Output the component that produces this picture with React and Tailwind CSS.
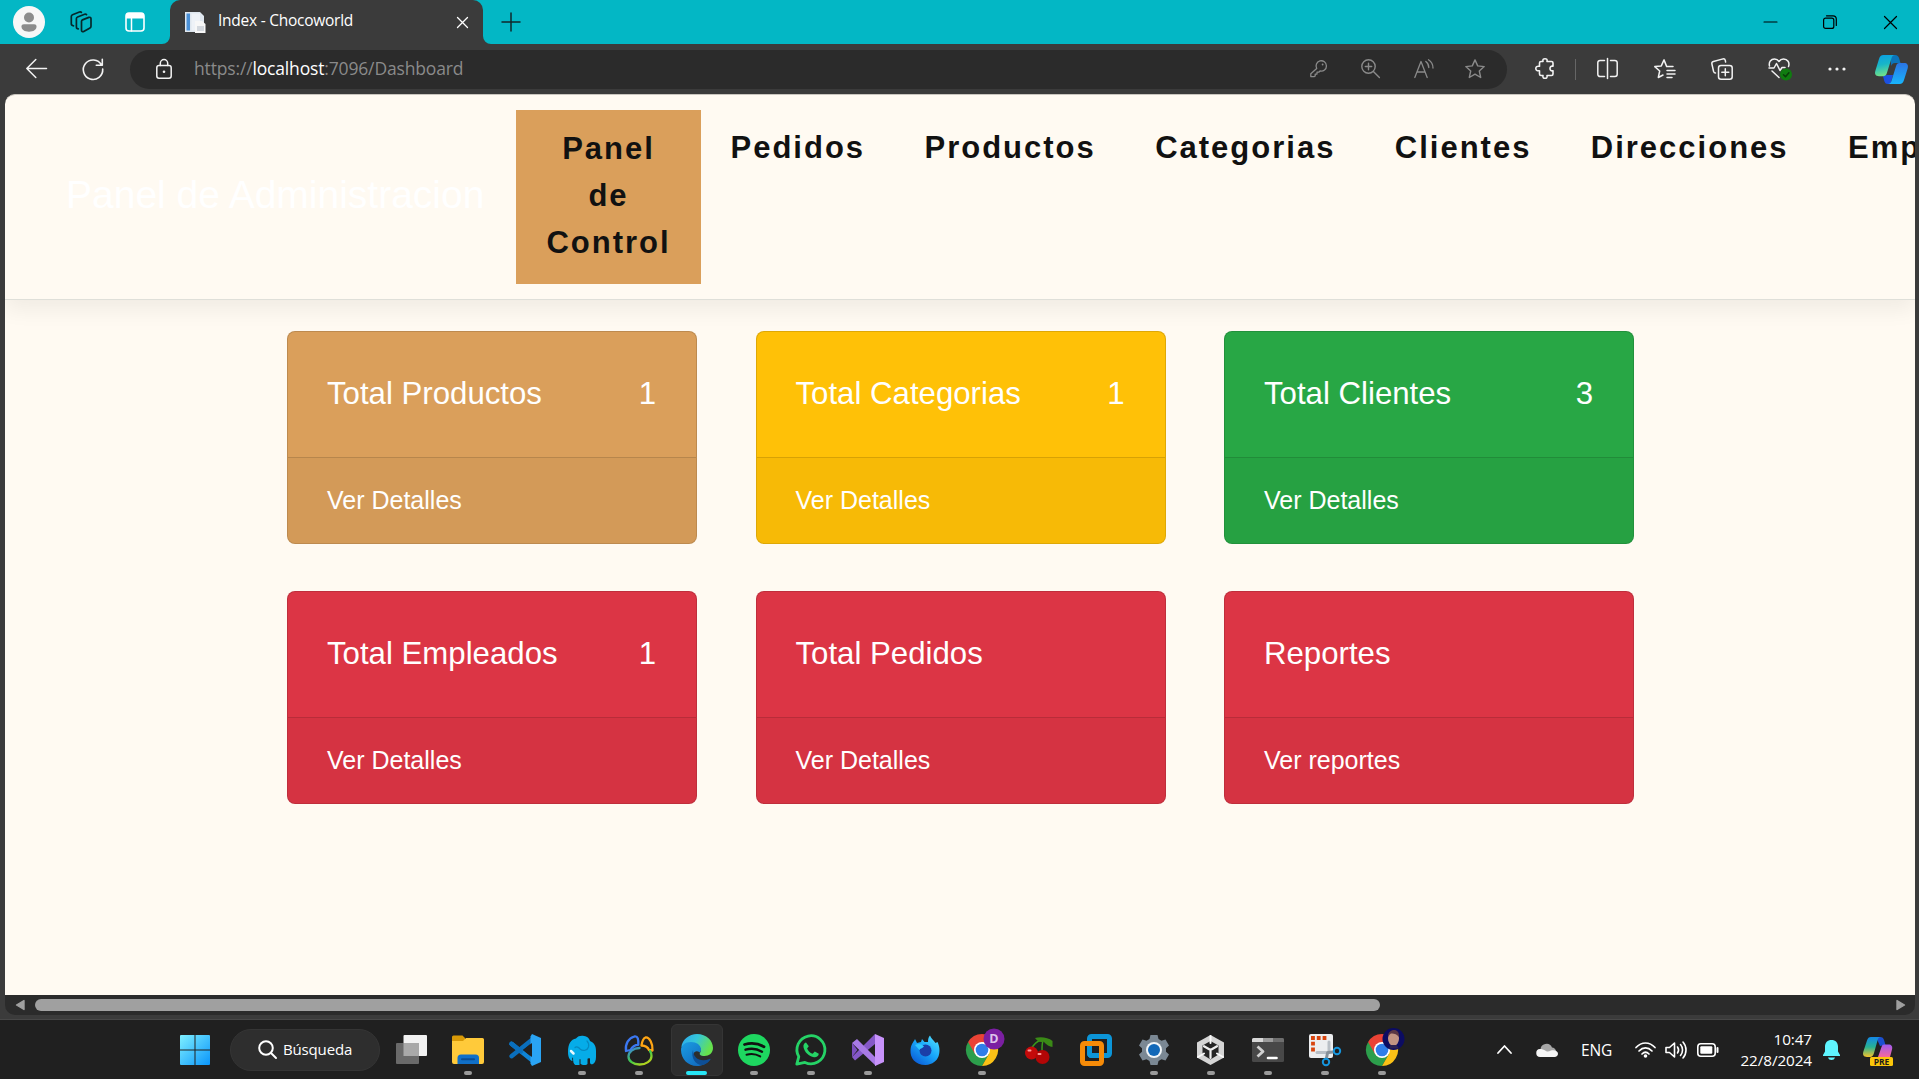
import React from "react";

const Svg = ({ w = 20, h = w, box, className = "", children, ...rest }) => (
  <svg
    width={w}
    height={h}
    viewBox={box || `0 0 ${w} ${h}`}
    fill="none"
    stroke="currentColor"
    strokeWidth="1.4"
    strokeLinecap="round"
    strokeLinejoin="round"
    className={"block shrink-0 overflow-visible " + className}
    {...rest}
  >
    {children}
  </svg>
);

function TitleBar() {
  return (
    <div className="flex h-11 shrink-0 items-center bg-[#03b7c5] text-[#10282b]">
      <Svg w={32} className="ml-[13px]" stroke="none">
        <circle cx="16" cy="16" r="16" fill="#f7f7f7" />
        <circle cx="16" cy="11.5" r="5" fill="#8c8c8c" />
        <path d="M8.5 20.5c0-1.4.9-2.3 2.3-2.3h10.4c1.4 0 2.3.9 2.3 2.3 0 3.3-3 5.2-7.500 5.200s-7.500-1.900-7.500-5.200z" fill="#8c8c8c" />
      </Svg>
      <Svg w={22} className="ml-[25px]" strokeWidth="1.700" stroke="#06282b">
        <path d="M12.500 8.900l6.300-2.500c1.200-.4 2.200.2 2.200 1.400v7.500c0 .7-.4 1.300-1 1.600l-6.300 3.600c-1.100.6-2.200 0-2.200-1.200v-8.700c0-.8.300-1.400 1-1.700z" />
        <path d="M8.300 17.800c-1.200 0-1.900-.6-1.900-1.800V7.800c0-.9.400-1.500 1.200-1.800l7-2.800c.8-.3 1.500-.1 1.900.4" />
        <path d="M3.500 14.800C2 14.800 1.300 14 1.300 12.800V5.500c0-.9.400-1.500 1.200-1.800L9.500 1c.8-.3 1.500-.1 1.900.4" />
      </Svg>
      <Svg w={20} className="ml-[33px]" stroke="none">
        <rect x="1" y="1" width="18" height="18" rx="3" stroke="#fff" strokeWidth="1.600" />
        <path d="M1 4a3 3 0 013-3h12a3 3 0 013 3v2.500H1z" fill="#fff" />
        <path d="M6.500 6v13" stroke="#fff" strokeWidth="1.500" />
      </Svg>
      <div className="relative ml-[25px] flex h-11 w-[313px] items-center rounded-t-[10px] bg-[#3b3b3b] text-white">
        <Svg w={8} className="absolute bottom-0 -left-2" stroke="none">
          <path d="M8 0v8H0a8 8 0 008-8z" fill="#3b3b3b" />
        </Svg>
        <Svg w={8} className="absolute -right-2 bottom-0" stroke="none">
          <path d="M0 0v8h8a8 8 0 01-8-8z" fill="#3b3b3b" />
        </Svg>
        <Svg w={21} className="ml-[15px]" stroke="none">
          <path d="M0 0h15l4 4v16H0z" fill="#dfe7ef" />
          <path d="M1.500 1.500h3.500v17H1.500z" fill="#4a90d6" />
          <path d="M6.500 1.500h8.500v17H6.500z" fill="#eef2f7" />
          <path d="M10 9h7l3.500 3v9H10z" fill="#f7f7f7" />
          <path d="M12 14h7v5h-7z" fill="#d3d8de" />
        </Svg>
        <span className="ml-[12px] w-[150px] pb-[2px] whitespace-nowrap font-['Open_Sans',sans-serif] text-[15.500px] tracking-[-0.250px]">Index - Chocoworld</span>
        <Svg w={11} className="ml-[89px]" strokeWidth="1.300">
          <path d="M.5.5l10 10M10.500.5l-10 10" />
        </Svg>
      </div>
      <Svg w={18} className="mb-px ml-[19px]" strokeWidth="1.500">
        <path d="M9 0v18M0 9h18" />
      </Svg>
      <div className="mr-[22px] ml-auto flex items-center text-black">
        <Svg w={13} strokeWidth="1.100"><path d="M0 6h13" /></Svg>
        <Svg w={14} className="ml-[46px]" strokeWidth="1.200">
          <rect x=".6" y="3.200" width="10.200" height="10.200" rx="2" />
          <path d="M3.500.8H10a3.300 3.300 0 013.300 3.300v6.400" />
        </Svg>
        <Svg w={13} className="ml-[47px]" strokeWidth="1.200"><path d="M.5.5l12 12M12.500.5l-12 12" /></Svg>
      </div>
    </div>
  );
}

const star = "M10 .9l2.700 6 6.500.7-4.900 4.400 1.400 6.500-5.700-3.300-5.700 3.300 1.400-6.500L.8 7.600l6.500-.7z";

function CopilotLogo() {
  return (
    <Svg w={33} h={29} stroke="none">
      <defs>
        <linearGradient id="cpA" x1="0" y1="0" x2=".2" y2="1">
          <stop offset="0" stopColor="#0a9de6" /><stop offset=".5" stopColor="#18b6c8" /><stop offset="1" stopColor="#6fe08a" />
        </linearGradient>
        <linearGradient id="cpB" x1="0" y1="0" x2="0" y2="1">
          <stop offset="0" stopColor="#2b74e4" /><stop offset="1" stopColor="#18b5fb" />
        </linearGradient>
      </defs>
      <path d="M15 0h5c2.500 0 3.500 1.200 4.200 3.500L25.500 8H20c-2 0-3 1-3.700 3z" fill="#0b74ba" />
      <path d="M8 21l4-1h6l-2.500 9H13c-2.300 0-3.200-1.300-3.800-3.300z" fill="#1c50e0" />
      <path d="M8.500 0H20c-2 0-3 1.500-3.600 3.500l-4.500 14.500c-.7 2.200-1.800 3.200-4 3.200H4c-3.300 0-4.600-2-3.700-5.200L4 4C4.800 1.300 6 0 8.500 0z" fill="url(#cpA)" />
      <path d="M24.500 8H29c3.300 0 4.600 2 3.700 5.200L29 25c-.8 2.700-2 4-4.500 4H13c2 0 3-1.500 3.600-3.500L21 11.200C21.700 9 22.500 8 24.500 8z" fill="url(#cpB)" />
    </Svg>
  );
}

function Toolbar() {
  return (
    <div className="flex h-[50px] shrink-0 items-center bg-[#3b3b3b] text-[#f2f2f2]">
      <Svg w={21} className="mb-px ml-[26px]" strokeWidth="1.500"><path d="M20.500 10.500H.8M9.800 1.500l-9 9 9 9" /></Svg>
      <Svg w={22} className="mb-px ml-[35px]" strokeWidth="1.600">
        <path d="M19.500 7A9.700 9.700 0 1020.700 11M20.300 1.300v6h-6" />
      </Svg>
      <div className="ml-[26px] flex h-[39px] w-[1377px] items-center rounded-full bg-[#2b2b2b] pb-px text-[#8a8a8a]">
        <Svg w={16} h={20} className="ml-[26px] text-[#f2f2f2]" strokeWidth="1.500">
          <rect x=".8" y="6.500" width="14.400" height="12.700" rx="2.200" />
          <path d="M4.300 6.500V4.300a3.700 3.700 0 017.400 0v2.200" />
          <circle cx="8" cy="12.800" r="1.300" fill="currentColor" stroke="none" />
        </Svg>
        <span className="ml-[22px] pb-px whitespace-nowrap font-['Open_Sans',sans-serif] text-[17.500px] tracking-[-0.160px]">
          https://<span className="text-white">localhost</span>:7096/Dashboard
        </span>
        <div className="mr-[22px] ml-auto flex items-center">
          <Svg w={17} strokeWidth="1.300">
            <path d="M6.700 8.500A5.200 5.200 0 1110 11l-1.200 1.200H7v1.900H5.200V16l-.8.600H.8v-2.800z" />
            <circle cx="12.600" cy="4.500" r=".9" fill="currentColor" stroke="none" />
          </Svg>
          <Svg w={19} className="ml-[34px]" strokeWidth="1.400">
            <circle cx="7.500" cy="7.500" r="6.700" /><path d="M12.400 12.400l6 6M7.500 4.300v6.400M4.300 7.500h6.400" />
          </Svg>
          <Svg w={20} className="ml-[34px]" strokeWidth="1.300">
            <path d="M.8 18.500L7 2.500l6.200 16M3 13h8M11.800 2.500c2 1.500 3 3.500 3 6M14.500.8c3 2 4.500 4.700 4.500 8.200" />
          </Svg>
          <Svg w={20} className="ml-[31px]"><path d={star} /></Svg>
        </div>
      </div>
      <Svg w={20} h={21} className="mb-px ml-[28px]" strokeWidth="1.600">
        <path d="M6 3.500h2c-.5-2 .5-2.800 2-2.800s2.500.8 2 2.800h4.500c1 0 1.500.5 1.500 1.500v3.300c-2-.5-3 .6-3 2.200s1 2.700 3 2.200V16c0 1-.5 1.500-1.500 1.500H12c.5 2-.5 2.800-2 2.800s-2.500-.8-2-2.800H6c-1 0-1.500-.5-1.500-1.500v-3.300c-2.500.5-3.700-.6-3.700-2.200s1.200-2.700 3.700-2.200V5c0-1 .5-1.500 1.500-1.500z" />
      </Svg>
      <div className="ml-[20px] h-[21px] w-px bg-[#666]" />
      <Svg w={21} className="mb-px ml-[21px]" strokeWidth="1.500">
        <path d="M10.500.5v20M7.500 2.500H3a2.200 2.200 0 00-2.200 2.200v11.600A2.200 2.200 0 003 18.500h4.500M13.500 2.500H18a2.200 2.200 0 012.200 2.200v11.600a2.200 2.200 0 01-2.200 2.200h-4.500" />
      </Svg>
      <Svg w={22} h={20} className="mb-px ml-[36px]" strokeWidth="1.500">
        <path d="M19 7.600h-6.300L10 .9l-2.700 6L.8 7.600 5.700 12l-1.400 6.500L9 16M13 11.500h8M13 15h8M13 18.500h5" />
      </Svg>
      <Svg w={22} className="mb-px ml-[35px]" strokeWidth="1.500">
        <rect x="7.500" y="7.500" width="13.700" height="13.700" rx="2.500" />
        <path d="M14.300 10.800v7M10.800 14.300h7M4.500 15c-1 0-1.600-.6-1.900-1.500L.9 6c-.3-1.300.3-2.200 1.500-2.500L12 .9c1.200-.2 2 .3 2.300 1.500l.3 1.700" />
      </Svg>
      <Svg w={24} className="mb-px ml-[35px]" strokeWidth="1.500">
        <path d="M1.500 9C.5 5 3 2 6.500 2c2 0 3.500 1 4.500 2.500C12 3 13.500 2 15.500 2 19.500 2 22 5.500 20.500 9.500M1 11h5l2.500-4.500 3.500 7 2-3h3M4 14l7 6.500" />
        <circle cx="18" cy="17.500" r="6" fill="#107c10" stroke="none" />
        <path d="M15.500 17.700l2 2 3.400-4" stroke="#0a3d0a" />
      </Svg>
      <Svg w={18} h={4} className="ml-[36px]" stroke="none">
        <g fill="currentColor"><circle cx="2" cy="2" r="1.600" /><circle cx="9" cy="2" r="1.600" /><circle cx="16" cy="2" r="1.600" /></g>
      </Svg>
      <div className="ml-[29px]"><CopilotLogo /></div>
    </div>
  );
}

const links = ["Pedidos", "Productos", "Categorias", "Clientes", "Direcciones", "Empleados"];

function NavBar() {
  return (
    <nav className="flex h-[205px] shrink-0 items-center border-b border-[#dfdfd9] pb-px shadow-[0_10px_20px_rgba(0,0,0,0.06)]">
      <div className="ml-[61px] w-[450px] shrink-0 pb-[3px] whitespace-nowrap text-[39px] text-white">Panel de Administracion</div>
      <div className="flex shrink-0 items-start text-[31px] leading-[47px] font-bold tracking-[2px] text-[#111]">
        <div className="h-[174px] w-[185px] bg-[#da9f5b] px-[30px] pt-[15px] text-center">Panel de Control</div>
        <div className="flex gap-[59.400px] pt-[14px] pl-[29.500px]">
          {links.map((l) => <span key={l}>{l}</span>)}
        </div>
      </div>
    </nav>
  );
}

const cards = [
  ["Total Productos", "1", "Ver Detalles", "bg-[#da9f5b]"],
  ["Total Categorias", "1", "Ver Detalles", "bg-[#ffc107]"],
  ["Total Clientes", "3", "Ver Detalles", "bg-[#28a745]"],
  ["Total Empleados", "1", "Ver Detalles", "bg-[#dc3545]"],
  ["Total Pedidos", "", "Ver Detalles", "bg-[#dc3545]"],
  ["Reportes", "", "Ver reportes", "bg-[#dc3545]"],
];

function Cards() {
  return (
    <div className="mt-[31px] ml-[282px] grid w-[1347px] grid-cols-3 gap-x-[58.500px] gap-y-[47.500px] text-white">
      {cards.map(([title, n, link, bg]) => (
        <div key={title} className={"h-[212.500px] overflow-hidden rounded-[8px] border border-black/13 bg-clip-border " + bg}>
          <div className="flex h-[125px] justify-between pr-[40px] pl-[39px] pt-[38px] text-[31.200px] leading-[47px]">
            <span className="whitespace-nowrap">{title}</span>
            <span>{n}</span>
          </div>
          <div className="h-[86px] border-t border-black/13 bg-black/3 px-[39px] pt-[22.500px] text-[25px] leading-[38px]">{link}</div>
        </div>
      ))}
    </div>
  );
}

function ScrollBar() {
  return (
    <div className="flex h-5 shrink-0 items-center rounded-b-[10px] bg-[#2b2b2b] text-[#a0a0a0]">
      <Svg w={10} h={12} className="ml-[10px]"><path d="M9 1.500v9L1.500 6z" fill="currentColor" /></Svg>
      <div className="ml-[10px] h-3 w-[1345px] rounded-full bg-[#a0a0a0]" />
      <Svg w={10} h={12} className="mr-[9px] ml-auto"><path d="M1 1.500v9L8.500 6z" fill="currentColor" /></Svg>
    </div>
  );
}

function Chrome({ children }) {
  return (
    <Svg w={32} stroke="none">
      <path d="M2.140 8A16 16 0 0016 32l6.900-12L16 16z" fill="#2c9e4b" />
      <path d="M16 8h13.860a16 16 0 01-13.860 24l6.900-12z" fill="#fbc116" />
      <path d="M2.140 8A16 16 0 0129.860 8H16l-7 12z" fill="#ea4335" />
      <circle cx="16" cy="16" r="8" fill="#fff" />
      <circle cx="16" cy="16" r="6.300" fill="#2f7de9" />
      {children}
    </Svg>
  );
}

const apps = [
  { run: true, icon: (
    <Svg w={32} stroke="none">
      <path d="M0 3a1.500 1.500 0 011.500-1.500h9L13 4v4H0z" fill="#d99a07" />
      <path d="M0 7h11l3-3h16.500A1.500 1.500 0 0132 5.500V28a2 2 0 01-2 2H2a2 2 0 01-2-2z" fill="#ffca3a" />
      <path d="M5.500 30v-6a3.500 3.500 0 013.500-3.500h14.500A3.500 3.500 0 0127 24v6z" fill="#1170c8" />
      <path d="M10 25.300h12" stroke="#0b4d94" strokeWidth="2" />
    </Svg>) },
  { icon: (
    <Svg w={32} stroke="none">
      <path d="M2.500 9.800L24 27" stroke="#0f84d6" strokeWidth="4.500" />
      <path d="M2.500 22.200L24 5" stroke="#0a6fbd" strokeWidth="4.500" />
      <path d="M2.500 9.800L12 17.400" stroke="#0a6fbd" strokeWidth="4.500" />
      <path d="M23 0l9 4v24l-9 4-1.500-2.500V2.500z" fill="#2aa4f4" />
      <path d="M23 9v14l-9-7z" fill="#202020" />
    </Svg>) },
  { run: true, icon: (
    <Svg w={30} h={31} stroke="none">
      <path d="M1 17C1 9 4 4 9 3.500 11 1 14 .5 17 1c4 .5 5.500 3 6 5 4 1.500 6 5 6 10v6c0 3.500-1.200 6-3 7-1.500.7-3 0-3-1.500V23.500c-1-.5-2-.5-2.500.3v5c0 1.500-5.500 2-7 0v-4.500h-1V30H8.300C6.500 29 6 26.500 6 22.500c-1 0-1 1.500-.5 3.500C2.500 25.500 1 21.500 1 17z" fill="#06ace8" />
      <path d="M8 12.500c1.500-1.500 4 0 5 1.500 3 2.500 7.500 1.500 8.500-2 .6-2.500 0-4.500-1.500-6" stroke="#0689c0" strokeWidth="1.200" />
      <path d="M4 16l2.500 2.500" stroke="#e8f8ff" strokeWidth="2.500" />
    </Svg>) },
  { run: true, icon: (
    <Svg w={30} h={32} strokeWidth="2.300">
      <defs>
        <linearGradient id="ring" x1="0" y1="0" x2=".7" y2="1"><stop offset="0" stopColor="#3b7de6" /><stop offset=".6" stopColor="#42cc48" /><stop offset="1" stopColor="#b8d41c" /></linearGradient>
      </defs>
      <path d="M2 17C1 10 4.500 4 10.500 2.500c3.500-.5 4 3 3.800 8.300C10.500 10.800 8 13 6.500 16z" stroke="#3b78f2" />
      <path d="M17.500 11.500c.5-3.500 1.500-7 4-8 4-.6 7.500 6.500 7 13l-3.500-.5c-1-2.500-4-4.300-7.500-4.500z" stroke="#ffa514" />
      <path d="M15.500 14C9 14 4.500 18 4.500 22.500S9 30.500 15.500 30.500 27.500 27 27.500 22c0-2-.5-3.500-1.500-5" stroke="url(#ring)" />
    </Svg>) },
  { active: true, icon: (
    <Svg w={32} stroke="none">
      <defs>
        <linearGradient id="edA" x1="0" y1="0" x2="1" y2=".4"><stop offset="0" stopColor="#2aa6f0" /><stop offset=".5" stopColor="#35c6d8" /><stop offset="1" stopColor="#66e24d" /></linearGradient>
        <linearGradient id="edB" x1="0" y1="0" x2="1" y2="1"><stop offset="0" stopColor="#1b9de2" /><stop offset="1" stopColor="#0f5fb8" /></linearGradient>
      </defs>
      <path d="M.3 13C1.500 5.500 8 0 16 0c9.500 0 16 6.500 16 14 0 5-4 8-8.500 8-4 0-5.500-1.500-4.500-3 2.500-4-1-9-7-9-5 0-10 2-11.700 3z" fill="url(#edA)" />
      <path d="M0 16c0-4.500 4-8 10-8 5.500 0 10 3 10 7.500 0 1.500-.8 2.500-1.200 3C14 15 10.500 20 14 24.500c3.500 4.300 9.500 4.500 15 1C26 29.500 21.500 32 16 32 7 32 0 25 0 16z" fill="url(#edB)" />
      <path d="M12 16c-2.500 7.500 2.500 15.500 10 15 3.500-1 6-3.500 7.500-5.500.3-.7-.2-1-1-.6C20 28.500 12 24.500 12 16z" fill="#0e4f96" />
    </Svg>) },
  { run: true, icon: (
    <Svg w={32}>
      <circle cx="16" cy="16" r="16" fill="#1ed760" stroke="none" />
      <g stroke="#111"><path d="M6.500 10.500c6.500-1.800 13.500-1.200 19.500 2.200" strokeWidth="2.800" /><path d="M7.500 15.700c5.500-1.600 11.500-1 16.500 2" strokeWidth="2.400" /><path d="M8.500 20.700c4.700-1.300 9.500-.8 13.700 1.700" strokeWidth="2" /></g>
    </Svg>) },
  { run: true, icon: (
    <Svg w={32}>
      <path d="M1.800 30.200l2-7.500A14 14 0 1110 28.400z" stroke="#25d366" strokeWidth="2.800" />
      <path d="M11 8.500c-1.700.5-3 2.300-2.500 4.800 1 5 5.500 9.200 10.500 10 2.500.3 4.600-1.300 4.800-3.500l-4-2.300-2.200 2.200c-2.600-1-4.400-2.700-5.500-5.300l1.700-2.200z" fill="#25d366" stroke="none" />
    </Svg>) },
  { run: true, icon: (
    <Svg w={32} stroke="none">
      <path d="M0 9l5.500 7L0 23z" fill="#7c4fc0" />
      <path d="M0 23l3 3.500L23 10V0z" fill="#8558c8" />
      <path d="M0 9l5-4L24 24v8z" fill="#a87ae6" />
      <path d="M23 0l9 4v24l-9 4z" fill="#c893fb" />
    </Svg>) },
  { icon: (
    <Svg w={31} stroke="none">
      <defs><linearGradient id="ffA" x1="1" y1="0" x2=".2" y2="1"><stop offset="0" stopColor="#5be6ff" /><stop offset=".5" stopColor="#19a9fb" /><stop offset="1" stopColor="#0b5bd6" /></linearGradient></defs>
      <path d="M5 4l2 4 4-1 1-3 2.500 3H18c0-3 .5-5 2-6.500 1 3 3.500 4.500 5.500 7.500l2-1c4 8 3 22-12 23C5 30 0 23 .5 15 1 9 3 8 5 4z" fill="url(#ffA)" />
      <circle cx="15.500" cy="15.500" r="6" fill="#1b3fa8" />
      <path d="M5 10c4-2 7-1 9 1.500-2 2-4 2-4.500 3.500" fill="#2fc6ff" />
    </Svg>) },
  { run: true, icon: (
    <Chrome>
      <circle cx="28" cy="5" r="10.500" fill="#7b1fa2" />
      <text x="28" y="9.400" textAnchor="middle" fill="#ddc3ea" fontSize="12.500" fontWeight="700" fontFamily="Open Sans, sans-serif">D</text>
    </Chrome>) },
  { icon: (
    <Svg w={28} h={27}>
      <path d="M6 12C9 7 13 4 16 3M17 13c0-4 0-7 1-9" stroke="#3a9a1a" strokeWidth="1.500" />
      <path d="M10 1c5-1.500 13-1 17.500 3v6c-3 0-6-2.500-9-5.500C15 6 12 4 10 1z" fill="#3a8a16" stroke="none" />
      <circle cx="6.500" cy="16" r="6.500" fill="#c40a0a" stroke="none" />
      <circle cx="17.500" cy="20" r="7" fill="#b30606" stroke="none" />
      <path d="M3.500 13.500h2M13.500 17h2" stroke="#ff9a9a" strokeWidth="2" />
    </Svg>) },
  { icon: (
    <Svg w={32} strokeWidth="5" strokeLinecap="butt">
      <rect x="9.500" y="2.500" width="20" height="19" rx="2" stroke="#0c95d8" />
      <path d="M14 9.500H4.500a2 2 0 00-2 2v16a2 2 0 002 2h15a2 2 0 002-2V19M14 9.500h5.500a2 2 0 012 2V19" stroke="#f68b08" />
      <path d="M9.500 12v7.500a2 2 0 002 2H19" stroke="#0c95d8" />
    </Svg>) },
  { run: true, icon: (
    <Svg w={32} stroke="none">
      <path d="M12.500 1h7l1 4 3 1.700 4-1.200 3.500 6-3 2.800v3.400l3 2.800-3.500 6-4-1.200-3 1.700-1 4h-7l-1-4-3-1.700-4 1.200-3.500-6 3-2.800v-3.400l-3-2.800 3.500-6 4 1.200 3-1.700z" fill="#7b8894" />
      <circle cx="16" cy="16" r="8" fill="#f1f5f8" /><circle cx="16" cy="16" r="6" fill="#1268b8" />
    </Svg>) },
  { run: true, icon: (
    <Svg w={27} h={30} stroke="none">
      <path d="M13.500 0L27 7.500v15L13.500 30 0 22.500v-15z" fill="#d5d5d5" />
      <path d="M13.500 6l8 4.500v9l-8 5-8-5v-9z" fill="#252525" />
      <path d="M13.500 15v8M13.500 15l6.500-3.800M13.500 15L7 11.200" stroke="#f0f0f0" strokeWidth="2.200" />
      <path d="M13.500 1v7M1 22l6-3.500M26 22l-6-3.500" stroke="#fafafa" strokeWidth="2" />
    </Svg>) },
  { run: true, icon: (
    <Svg w={32} h={24}>
      <rect width="32" height="24" rx="1.500" fill="#484848" stroke="none" />
      <path d="M1.500 0H11v4H0V1.500A1.500 1.500 0 011.500 0z" fill="#d8d8d8" stroke="none" />
      <path d="M11 0h10v4H11z" fill="#9b9b9b" stroke="none" /><path d="M21 0h9.500A1.500 1.500 0 0132 1.500V4H21z" fill="#6e6e6e" stroke="none" />
      <path d="M5.500 8.500l5.500 5-5.500 5" stroke="#d0d0d0" strokeWidth="2.800" strokeLinecap="butt" /><path d="M16 20h8.500" stroke="#fff" strokeWidth="2.600" />
    </Svg>) },
  { run: true, icon: (
    <Svg w={32}>
      <rect width="24" height="24" rx="2" fill="#eceef0" stroke="none" />
      <path d="M2 4h16M4 2v17" stroke="#d8450f" strokeWidth="3.800" strokeDasharray="3.800 2" strokeLinecap="butt" />
      <path d="M20 8v10.500H8" stroke="#b8bfc6" strokeWidth="3" />
      <path d="M19 18.500l5-.5M18.500 19l-1 5" stroke="#87919a" strokeWidth="3" />
      <circle cx="28" cy="17" r="3.200" stroke="#1595dd" strokeWidth="2" /><circle cx="17" cy="28" r="3.200" stroke="#1595dd" strokeWidth="2" />
    </Svg>) },
  { run: true, icon: (
    <Chrome>
      <circle cx="27.500" cy="5" r="11" fill="#0c0c62" />
      <ellipse cx="27.500" cy="4.500" rx="5.500" ry="7.500" fill="#c29483" />
      <path d="M22 3c0-5 3-7 6-7s5.500 2.500 5 7c-2-3-6-4-8-3.500-1 .5-2 1.500-3 3.500z" fill="#5a3644" />
      <path d="M24.500 11h6l2.500 3.500h-10z" fill="#2b2152" />
    </Chrome>) },
];

function TaskBar() {
  return (
    <div className="flex h-[59px] shrink-0 items-center bg-[#202020] font-['Open_Sans',sans-serif] text-white">
      <Svg w={30} className="ml-[180px]" stroke="none">
        <defs><linearGradient id="win" x1="0" y1="0" x2="30" y2="30" gradientUnits="userSpaceOnUse"><stop stopColor="#7ff0ff" /><stop offset="1" stopColor="#0a95fb" /></linearGradient></defs>
        <path d="M1 0h13.500v14.500H0V1a1 1 0 011-1zM15.500 0H29a1 1 0 011 1v13.500H15.500zM0 15.500h14.500V30H1a1 1 0 01-1-1zM15.500 15.500H30V29a1 1 0 01-1 1H15.500z" fill="url(#win)" />
      </Svg>
      <div className="ml-[20px] flex h-[42px] w-[150px] items-center rounded-full border border-[#353535] bg-[#2e2e2e]">
        <Svg w={19} className="mb-px ml-[27px]" strokeWidth="2"><circle cx="8" cy="8" r="6.800" /><path d="M13 13l5 5" /></Svg>
        <span className="ml-[6px] text-[15px] tracking-[-0.150px]">Búsqueda</span>
      </div>
      <Svg w={31} h={30} className="ml-[16px]" stroke="none">
        <rect x="7.500" width="23.500" height="21" rx="1" fill="#f2f2f2" />
        <rect y="8" width="23" height="21" rx="1" fill="#6a6a6a" />
        <rect x="7.500" y="8" width="15.500" height="13" fill="#a9a9a9" />
      </Svg>
      <div className="ml-[12.500px] flex h-full">
        {apps.map((a, i) => (
          <div key={i} className="flex w-[57.130px] justify-center pt-[4px]">
            <div className={"relative flex h-[52px] w-[52px] items-center justify-center rounded-[6px] " + (a.active ? "border border-[#353535] bg-[#2d2d2d]" : "")}>
              {a.icon}
              {a.run && <div className="absolute bottom-px left-[22px] h-1 w-2 rounded-full bg-[#9a9a9a]" />}
              {a.active && <div className="absolute bottom-0 left-[14px] h-1 w-[21px] rounded-full bg-[#27e5f5]" />}
            </div>
          </div>
        ))}
      </div>
      <div className="mr-[26px] ml-auto flex items-center">
        <Svg w={15} h={9} strokeWidth="1.800"><path d="M1 8l6.500-7L14 8" /></Svg>
        <Svg w={22} h={14} className="ml-[24px]" stroke="none">
          <path d="M4.500 7A6 6 0 0116 4.500c2 0 3.500 1.500 4 3.500L10 11z" fill="#a7a7a7" />
          <path d="M4.500 14A4 4 0 014 6c2 0 3.500.5 6 2 1.500 1 3 .5 5-.5 3.500-1 7 .5 7 3.300 0 2-1.500 3.200-3.500 3.200z" fill="#f5f5f5" />
        </Svg>
        <span className="ml-[23px] w-[33px] pt-[2px] text-[15.500px] tracking-[-0.200px]">ENG</span>
        <Svg w={21} h={16} className="ml-[21px]" strokeWidth="1.700">
          <path d="M1 5.500c5.500-6 13.500-6 19 0M4 9c4-4.200 9-4.200 13 0M7 12c2.200-2.200 4.800-2.200 7 0" /><circle cx="10.500" cy="14" r="1.800" fill="currentColor" stroke="none" />
        </Svg>
        <Svg w={22} h={18} className="ml-[9px]" strokeWidth="1.600">
          <path d="M1 6.500h3.500L9.500 2v14l-5-4.500H1zM12.500 6c1.300 1.800 1.300 4.200 0 6M15.500 3.500c2.700 3 2.700 8 0 11M18 1c4 4.500 4 11.500 0 16" />
        </Svg>
        <Svg w={22} h={14} className="ml-[10px]" strokeWidth="1.600">
          <rect x=".8" y=".8" width="17.400" height="12.400" rx="3" /><rect x="3.300" y="3.300" width="12" height="7.400" rx="1" fill="currentColor" stroke="none" /><path d="M20.500 5v4" strokeWidth="2" />
        </Svg>
        <div className="ml-[17px] w-[76px] text-right text-[15.300px] leading-[21px] tracking-[-0.100px]">10:47<br />22/8/2024</div>
        <Svg w={17} h={20} className="ml-[11px]" stroke="none">
          <path d="M8.500 0c4 0 6.500 2.700 6.500 6.500v5L17 15v1H0v-1l2-3.500v-5C2 2.700 4.500 0 8.500 0zM5 17.500h7c-.5 1.700-1.800 2.500-3.500 2.500S5.500 19.200 5 17.500z" fill="#5ff5ff" />
        </Svg>
        <Svg w={30} h={29} className="mt-[3px] ml-[23px]" stroke="none">
          <defs>
            <linearGradient id="prA" x1="0" y1="0" x2="0" y2="1"><stop offset="0" stopColor="#1488e8" /><stop offset=".5" stopColor="#27b293" /><stop offset="1" stopColor="#f5c32a" /></linearGradient>
            <linearGradient id="prB" x1="0" y1="0" x2="0" y2="1"><stop offset="0" stopColor="#a05af0" /><stop offset="1" stopColor="#f5689a" /></linearGradient>
          </defs>
          <path d="M13 0h4c2.500 0 3.500 1 4.200 3.500L22.500 8 17 9z" fill="#1c4fd0" />
          <path d="M8 0h10c-2 0-3 1.500-3.500 3.500L11 16c-.7 2.500-2 4-4 4H4c-3.300 0-4.600-2-3.700-5.200L4 3.500C4.800 1 6 0 8 0z" fill="url(#prA)" />
          <path d="M21 7.500h4.500c3 0 4.300 2 3.500 5L27 20H15l3.500-10c.6-1.700 1.200-2.500 2.500-2.500z" fill="url(#prB)" />
          <rect x="7" y="20" width="23" height="9" rx="1.500" fill="#fbc60a" />
          <text x="18.500" y="27.500" textAnchor="middle" fill="#1a1a1a" fontSize="8.500" fontWeight="700" fontFamily="Open Sans, sans-serif">PRE</text>
        </Svg>
      </div>
    </div>
  );
}

export default function App() {
  return (
    <div className="flex h-[1079px] w-[1919px] flex-col overflow-hidden bg-[#3b3b3b] font-['Liberation_Sans',Arial,sans-serif]">
      <TitleBar />
      <Toolbar />
      <div className="mr-[4px] ml-[5px] flex h-[921px] shrink-0 flex-col">
        <div className="flex h-[901px] flex-col overflow-hidden rounded-t-[10px] border-t border-[#c9c5be] bg-[#fffaf2]">
          <NavBar />
          <Cards />
        </div>
        <ScrollBar />
      </div>
      <div className="h-[5px] shrink-0 border-b border-[#484848] bg-[#3b3b3b]" />
      <TaskBar />
    </div>
  );
}
